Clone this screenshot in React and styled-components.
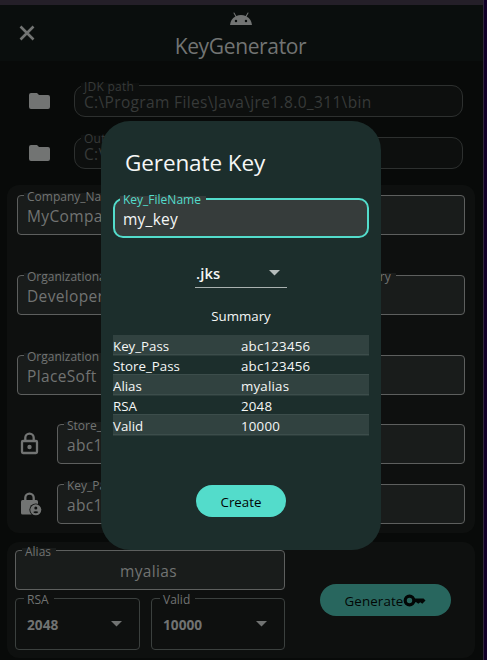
import React from "react";
import styled, { createGlobalStyle } from "styled-components";

const Global = createGlobalStyle`
  * { box-sizing: border-box; }
  body { margin: 0; background: #080a09; font-family: "Open Sans", "Noto Sans", sans-serif; overflow: hidden; }
`;

const Desktop = styled.div`
  width: 487px;
  height: 660px;
  background: #110027;
  overflow: hidden;
  display: grid;
  position: relative;
`;
const Window = styled.div`
  width: 484px;
  height: 660px;
  background: #080a09;
  border-right: 1px solid #302539;
  display: flex;
  flex-direction: column;
`;
const TitleStrip = styled.div`
  height: 5px;
  flex: none;
  background: #241f28;
`;
const Header = styled.header`
  height: 56px;
  flex: none;
  display: grid;
  grid-template-columns: 54px 373px 1fr;
  background: #0a0e0d;
  color: #727473;
`;
const CloseButton = styled.button`
  border: 0;
  padding: 0;
  background: none;
  color: inherit;
  display: grid;
  place-items: center;
`;
const Brand = styled.div`
  display: flex;
  flex-direction: column;
  align-items: center;
  padding-top: 7px;
`;
const AppName = styled.h1`
  margin: 7px 0 0;
  font-size: 21px;
  line-height: 28px;
  font-weight: 400;
  letter-spacing: -0.35px;
`;
const Paths = styled.section`
  height: 124px;
  flex: none;
  padding: 24px 20px 0 28px;
  display: flex;
  flex-direction: column;
  gap: 20px;
`;
const IconRow = styled.div`
  display: grid;
  grid-template-columns: ${(p) => p.$lead} 1fr;
  align-items: center;
  color: #727473;
`;
const Card = styled.section`
  width: 468px;
  height: ${(p) => p.$h}px;
  flex: none;
  margin: 0 0 9px 7px;
  border-radius: 12px;
  background: #0e100f;
  padding: ${(p) => p.$pad};
`;
const Outlined = styled.div`
  position: relative;
  width: 100%;
  height: ${(p) => p.$h || 40}px;
  border: ${(p) => p.$bw || 1}px solid ${(p) => p.$line || "#5d5f5e"};
  border-radius: ${(p) => p.$r || 4}px;
  background: ${(p) => p.$fill};
  color: ${(p) => p.$ink || "#717372"};
  display: flex;
  align-items: center;
  justify-content: ${(p) => p.$justify || "flex-start"};
  padding: 0 ${(p) => p.$right || 0}px 0 ${(p) => (p.$left ?? 10) - (p.$bw || 1)}px;
`;
const FieldLabel = styled.span`
  position: absolute;
  left: ${(p) => p.$left}px;
  top: ${(p) => -6 - p.$bw}px;
  padding: 0 5px 0 3px;
  font-size: 12px;
  line-height: 15px;
  white-space: nowrap;
  letter-spacing: ${(p) => p.$ls || 0}px;
  color: ${(p) => p.$color || "inherit"};
  background: linear-gradient(transparent 4px, ${(p) => p.$fill} 4px);
`;
const FieldValue = styled.span`
  font-size: ${(p) => p.$size || 15.5}px;
  font-weight: ${(p) => p.$weight || 400};
  letter-spacing: ${(p) => p.$ls ?? 0.35}px;
  line-height: 16px;
  white-space: nowrap;
  padding-top: ${(p) => p.$drop ?? 2}px;
`;
const Split = styled.div`
  display: grid;
  grid-template-columns: 301px 129px;
  gap: 18px;
`;
const Stack = styled.div`
  display: flex;
  flex-direction: column;
  gap: ${(p) => p.$gap}px;
`;
const SecretGroup = styled.div`
  margin-top: 29px;
  display: flex;
  flex-direction: column;
  gap: 20px;
`;
const Footer = styled.div`
  display: grid;
  grid-template-columns: 270px 131px;
  gap: 35px;
  align-items: center;
`;
const SelectPair = styled.div`
  display: grid;
  grid-template-columns: 125px 134px;
  gap: 11px;
`;
const Pill = styled.button`
  width: ${(p) => p.$w}px;
  height: 32px;
  border: 0;
  padding: 1px 0 0;
  border-radius: 16px;
  background: ${(p) => p.$bg};
  color: #020605;
  font: 500 13.3px "Open Sans", sans-serif;
  letter-spacing: ${(p) => p.$ls || 0}px;
  display: flex;
  align-items: center;
  justify-content: center;
`;
const Dialog = styled.div`
  position: absolute;
  left: 101px;
  top: 121px;
  width: 280px;
  height: 429px;
  border-radius: 29px;
  background: #1c2e2c;
  color: #f5f7f6;
  padding: 26px 12px 0;
  display: flex;
  flex-direction: column;
  align-items: center;
`;
const DialogTitle = styled.h2`
  margin: 0 0 19px;
  padding-left: 12px;
  align-self: stretch;
  font-size: 22.5px;
  line-height: 32px;
  font-weight: 400;
  white-space: nowrap;
  letter-spacing: -0.1px;
`;
const Extension = styled.div`
  width: 92px;
  height: 28px;
  margin-top: 22px;
  border-bottom: 1px solid #a9b1b0;
  display: flex;
  align-items: center;
  justify-content: space-between;
  padding: 0 7px 2px 1px;
`;
const SummaryTitle = styled.div`
  margin-top: 18px;
  height: 20px;
  font-size: 13.3px;
  line-height: 20px;
`;
const SummaryTable = styled.div`
  width: 256px;
  margin-top: 9px;
`;
const SummaryRow = styled.div`
  display: grid;
  grid-template-columns: 128px 128px;
  height: 20px;
  font-size: 13.3px;
  line-height: 23px;
  background: ${(p) => (p.$shade ? "#314240" : "transparent")};
  box-shadow: inset 0 -1px #3c4d4b, 0 1px #2b3c3a;
`;
const SummaryValue = styled.span`
  letter-spacing: 0.2px;
`;
const CreateSlot = styled.div`
  margin-top: 50px;
`;

const Close = () => (
  <svg width="16" height="16" viewBox="0 0 16 16" fill="none" stroke="currentColor" strokeWidth="2.6">
    <path d="M1.5 1.5l13 13M14.5 1.5l-13 13" />
  </svg>
);
const Android = () => (
  <svg width="24" height="13" viewBox="0 0 24 13" fill="currentColor" fillRule="evenodd">
    <path d="M17.6 4.48l1.84-3.18a.5.5 0 0 0-.9-.5L16.7 4A11.4 11.4 0 0 0 7.3 4L5.46.8a.5.5 0 1 0-.9.5L6.4 4.48A10.8 10.8 0 0 0 1 13h22a10.8 10.8 0 0 0-5.4-8.52zM7 10.25a1.25 1.25 0 1 1 0-2.5 1.25 1.25 0 0 1 0 2.5zm10 0a1.25 1.25 0 1 1 0-2.5 1.25 1.25 0 0 1 0 2.5z" />
  </svg>
);
const Folder = () => (
  <svg width="22" height="16" viewBox="0 0 22 16" fill="currentColor">
    <path d="M9 0H3a2 2 0 0 0-2 2v12a2 2 0 0 0 2 2h17a2 2 0 0 0 2-2V4a2 2 0 0 0-2-2h-9z" />
  </svg>
);
const Lock = () => (
  <svg width="24" height="24" viewBox="0 0 24 24" fill="none" stroke="currentColor" strokeWidth="2.3">
    <rect x="5" y="9" width="15" height="12" rx="1" />
    <path d="M8.3 9V5.8a4.2 4.2 0 0 1 8.4 0V9" />
    <circle cx="12.5" cy="15" r="2.2" fill="currentColor" stroke="none" />
  </svg>
);
const LockPerson = () => (
  <svg width="27" height="24" viewBox="0 0 27 24">
    <path d="M8.3 9V5.8a4.2 4.2 0 0 1 8.4 0V9" fill="none" stroke="currentColor" strokeWidth="2.3" />
    <rect x="4" y="8" width="17" height="14.5" rx="1.5" fill="currentColor" />
    <circle cx="18.8" cy="17.8" r="6.4" fill="#0e100f" />
    <circle cx="18.8" cy="17.8" r="5.5" fill="currentColor" />
    <circle cx="18.8" cy="16" r="1.5" fill="#0e100f" />
    <path d="M16.2 20a3 1.6 0 0 1 5.200 0 3.200 3.200 0 0 1-5.200 0z" fill="#0e100f" />
  </svg>
);
const Key = () => (
  <svg width="23" height="13" viewBox="0 0 23 13" fill="none" stroke="#020605">
    <circle cx="6.5" cy="6.5" r="4.3" strokeWidth="3.2" />
    <path d="M11 4.5h9.5l2 2-3.2 3.3-2-1.5-2 1.5-2-1.5H11z" fill="#020605" stroke="none" />
  </svg>
);
const Arrow = ({ color }) => (
  <svg width="11" height="6" viewBox="0 0 11 6" fill={color}>
    <path d="M0 0h11L5.5 5.5z" />
  </svg>
);

function Field({ label, value, fill = "#191c1b", labelColor, labelLs, labelLeft = 6, valueProps, children, ...box }) {
  return (
    <Outlined $fill={fill} {...box}>
      {label && (
        <FieldLabel $fill={fill} $color={labelColor} $ls={labelLs} $left={labelLeft} $bw={box.$bw || 1}>
          {label}
        </FieldLabel>
      )}
      {value && <FieldValue {...valueProps}>{value}</FieldValue>}
      {children}
    </Outlined>
  );
}

const PATHS = [
  ["JDK path", "C:\\Program Files\\Java\\jre1.8.0_311\\bin"],
  ["Output path", "C:\\Users"],
];
const SUMMARY = [
  ["Key_Pass", "abc123456"],
  ["Store_Pass", "abc123456"],
  ["Alias", "myalias"],
  ["RSA", "2048"],
  ["Valid", "10000"],
];
const selectBox = {
  fill: "#0e100f",
  labelLeft: 8,
  $h: 52,
  $line: "#3b403e",
  $justify: "space-between",
  $left: 12,
  $right: 17,
  valueProps: { $size: 13.7, $weight: 700, $ls: 0, $drop: 1 },
};

export default function App() {
  return (
    <Desktop>
      <Global />
      <Window>
        <TitleStrip />
        <Header>
          <CloseButton aria-label="Close"><Close /></CloseButton>
          <Brand>
            <Android />
            <AppName>KeyGenerator</AppName>
          </Brand>
        </Header>
        <Paths>
          {PATHS.map(([label, value]) => (
            <IconRow key={label} $lead="46px">
              <Folder />
              <Field
                label={label}
                value={value}
                fill="#0d0f0e"
                labelLs={0.25}
                valueProps={{ $drop: 1 }}
                $h={32}
                $r={11}
                $line="#2d302f"
                $ink="#373a39"
              />
            </IconRow>
          ))}
        </Paths>
        <Card $h={348} $pad="10px 10px 0">
          <Stack $gap={40}>
            <Field label="Company_Name" value="MyCompany" />
            <Split>
              <Field label="Organizational_Unit" value="Developer" />
              <Field label="Country" />
            </Split>
            <Field label="Organization" value="PlaceSoft" />
          </Stack>
          <SecretGroup>
            <IconRow $lead="40px">
              <Lock />
              <Field label="Store_Pass" value="abc123456" />
            </IconRow>
            <IconRow $lead="40px">
              <LockPerson />
              <Field label="Key_Pass" value="abc123456" />
            </IconRow>
          </SecretGroup>
        </Card>
        <Card $h={116} $pad="8px">
          <Footer>
            <Stack $gap={8}>
              <Field label="Alias" value="myalias" $justify="center" $right={10} $left={8} />
              <SelectPair>
                <Field label="RSA" value="2048" {...selectBox}><Arrow color="#717372" /></Field>
                <Field label="Valid" value="10000" {...selectBox}><Arrow color="#717372" /></Field>
              </SelectPair>
            </Stack>
            <Pill $w={131} $bg="#28665e" $ls={0.15}>Generate<Key /></Pill>
          </Footer>
        </Card>
      </Window>
      <Dialog role="dialog">
        <DialogTitle>Gerenate Key</DialogTitle>
        <Field
          label="Key_FileName"
          value="my_key"
          fill="#363c3b"
          labelColor="#53dccb"
          labelLeft={5}
          $bw={2}
          $r={10}
          $line="#53dccb"
          $ink="#f5f7f6"
          valueProps={{ $ls: 0.25 }}
        />
        <Extension>
          <FieldValue $size={14.8} $weight={600} $ls={0.15} $drop={0}>.jks</FieldValue>
          <Arrow color="#b5bcbb" />
        </Extension>
        <SummaryTitle>Summary</SummaryTitle>
        <SummaryTable>
          {SUMMARY.map(([name, value], i) => (
            <SummaryRow key={name} $shade={i % 2 === 0}>
              <span>{name}</span>
              <SummaryValue>{value}</SummaryValue>
            </SummaryRow>
          ))}
        </SummaryTable>
        <CreateSlot>
          <Pill $w={90} $bg="#53dccb">Create</Pill>
        </CreateSlot>
      </Dialog>
    </Desktop>
  );
}
